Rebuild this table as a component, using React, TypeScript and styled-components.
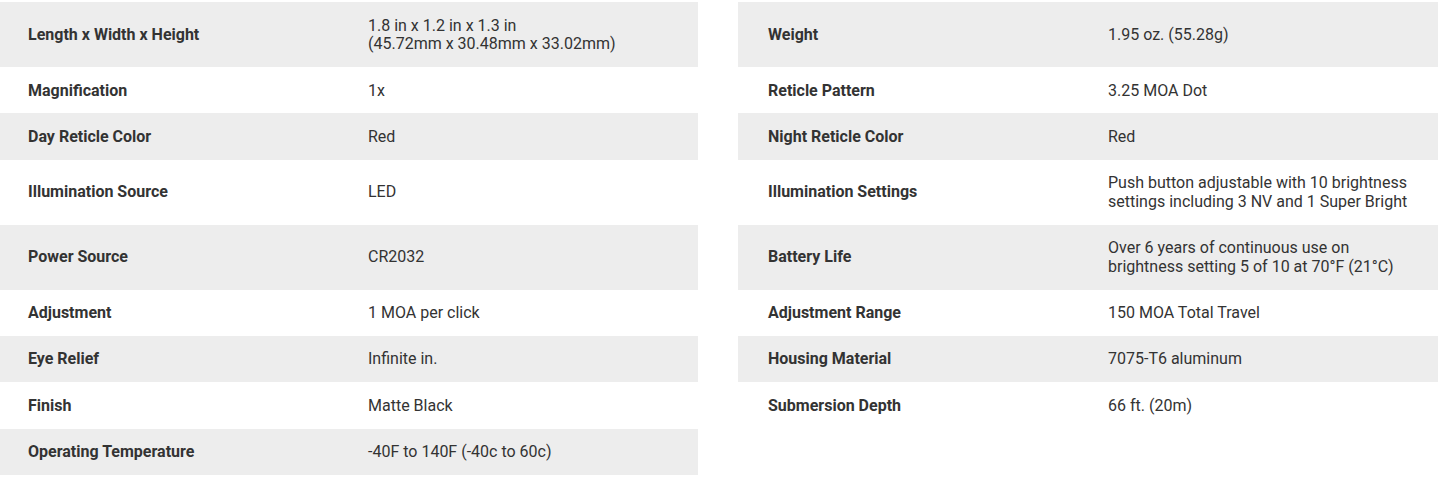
import React from 'react'
import styled, { createGlobalStyle } from 'styled-components'

type Spec = { label: string; value: string[] }

const specs: Spec[] = [
  { label: 'Length x Width x Height', value: ['1.8 in x 1.2 in x 1.3 in', '(45.72mm x 30.48mm x 33.02mm)'] },
  { label: 'Weight', value: ['1.95 oz. (55.28g)'] },
  { label: 'Magnification', value: ['1x'] },
  { label: 'Reticle Pattern', value: ['3.25 MOA Dot'] },
  { label: 'Day Reticle Color', value: ['Red'] },
  { label: 'Night Reticle Color', value: ['Red'] },
  { label: 'Illumination Source', value: ['LED'] },
  { label: 'Illumination Settings', value: ['Push button adjustable with 10 brightness', 'settings including 3 NV and 1 Super Bright'] },
  { label: 'Power Source', value: ['CR2032'] },
  { label: 'Battery Life', value: ['Over 6 years of continuous use on', 'brightness setting 5 of 10 at 70°F (21°C)'] },
  { label: 'Adjustment', value: ['1 MOA per click'] },
  { label: 'Adjustment Range', value: ['150 MOA Total Travel'] },
  { label: 'Eye Relief', value: ['Infinite in.'] },
  { label: 'Housing Material', value: ['7075-T6 aluminum'] },
  { label: 'Finish', value: ['Matte Black'] },
  { label: 'Submersion Depth', value: ['66 ft. (20m)'] },
  { label: 'Operating Temperature', value: ['-40F to 140F (-40c to 60c)'] },
]

const GlobalStyle = createGlobalStyle`
  body {
    margin: 0;
    background: #fff;
    font-family: Roboto, "Liberation Sans", Arial, sans-serif;
    color: #333;
  }
`

const App: React.FC = () => {
  return (
    <>
      <GlobalStyle />
      <SpecGrid>
        {specs.map((spec, i) => (
          <SpecRow
            key={spec.label}
            $shaded={Math.floor(i / 2) % 2 === 0}
            $right={i % 2 === 1}
          >
            <Label>{spec.label}</Label>
            <Value>
              {spec.value.map((line) => (
                <div key={line}>{line}</div>
              ))}
            </Value>
          </SpecRow>
        ))}
      </SpecGrid>
    </>
  )
}

export default App

const SpecGrid = styled.div`
  display: grid;
  grid-template-columns: 698px 700px;
  column-gap: 40px;
  padding-top: 2px;
`

const SpecRow = styled.div<{ $shaded: boolean; $right: boolean }>`
  display: flex;
  align-items: center;
  padding: 14.5px 0 13.16px ${({ $right }) => ($right ? '30px' : '28px')};
  background: ${({ $shaded }) => ($shaded ? '#ededed' : '#fff')};
  font-size: 16px;
  line-height: 18.67px;
`

const Label = styled.div`
  width: 340px;
  flex-shrink: 0;
  font-weight: 700;
`

const Value = styled.div`
  font-weight: 400;
`
